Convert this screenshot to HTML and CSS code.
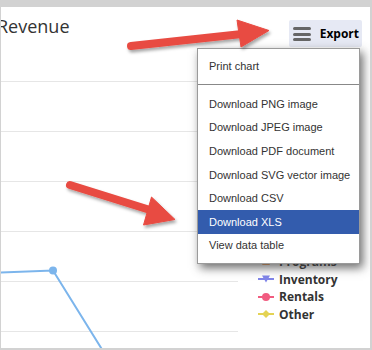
FILE: index.html
```html
<!DOCTYPE html>
<html lang="en">
<head>
  <meta charset="UTF-8">
  <title>Revenue chart export</title>
  <link rel="stylesheet" href="styles.css">
</head>
<body>

  <div class="frame">
    <div class="header">
      <h1 class="title">Revenue</h1>
      <button class="export-btn" type="button">
        <span class="burger"><i></i><i></i><i></i></span>
        Export
      </button>
    </div>

    <div class="main">
      <svg class="plot" width="237" height="267" viewBox="0 0 237 267">
        <g stroke="#e6e6e6" stroke-width="1">
          <line x1="0" y1="0.5" x2="237" y2="0.5"/>
          <line x1="0" y1="50.5" x2="237" y2="50.5"/>
          <line x1="0" y1="100.5" x2="237" y2="100.5"/>
          <line x1="0" y1="150.5" x2="237" y2="150.5"/>
          <line x1="0" y1="200.5" x2="237" y2="200.5"/>
          <line x1="0" y1="250.5" x2="237" y2="250.5"/>
        </g>
        <polyline points="-2,191.5 52,189.5 102,270" fill="none" stroke="#7cb5ec" stroke-width="2"/>
        <circle cx="52" cy="189.5" r="4" fill="#7cb5ec"/>
      </svg>

      <ul class="legend">
        <li>
          <svg width="16" height="10"><line x1="0" y1="5" x2="16" y2="5" stroke="#f7a35c" stroke-width="2"/><path d="M8 1 L12 8 L4 8 Z" fill="#f7a35c"/></svg>
          Programs
        </li>
        <li>
          <svg width="16" height="10"><line x1="0" y1="5" x2="16" y2="5" stroke="#8085e9" stroke-width="2"/><path d="M4 1.5 L12 1.5 L8 8.5 Z" fill="#8085e9"/></svg>
          Inventory
        </li>
        <li>
          <svg width="16" height="10"><line x1="0" y1="5" x2="16" y2="5" stroke="#f15c80" stroke-width="2"/><circle cx="8" cy="5" r="4" fill="#f15c80"/></svg>
          Rentals
        </li>
        <li>
          <svg width="16" height="10"><line x1="0" y1="5" x2="16" y2="5" stroke="#e4d354" stroke-width="2"/><path d="M8 1 L12 5 L8 9 L4 5 Z" fill="#e4d354"/></svg>
          Other
        </li>
      </ul>
    </div>

    <div class="menu">
      <div class="menu-item">Print chart</div>
      <hr class="menu-sep">
      <div class="menu-item">Download PNG image</div>
      <div class="menu-item">Download JPEG image</div>
      <div class="menu-item">Download PDF document</div>
      <div class="menu-item">Download SVG vector image</div>
      <div class="menu-item">Download CSV</div>
      <div class="menu-item active">Download XLS</div>
      <div class="menu-item">View data table</div>
    </div>
  </div>

  <!-- callout arrows drawn over the screenshot -->
  <svg class="callouts" width="372" height="350" viewBox="0 0 372 350">
    <defs>
      <filter id="shadow" x="-20%" y="-50%" width="140%" height="200%">
        <feDropShadow dx="1.5" dy="2.5" stdDeviation="1.5" flood-color="#000" flood-opacity="0.35"/>
      </filter>
    </defs>
    <g fill="#e84b42" stroke="#e84b42" filter="url(#shadow)">
      <line x1="131" y1="46" x2="242" y2="34" stroke-width="8" stroke-linecap="round"/>
      <path d="M237 20 L269 30.5 L241 47 Z" stroke-width="1" stroke-linejoin="round"/>
      <line x1="70" y1="185" x2="150" y2="210" stroke-width="8" stroke-linecap="round"/>
      <path d="M151.5 197 L175 219.5 L143.5 225 Z" stroke-width="1" stroke-linejoin="round"/>
    </g>
  </svg>

</body>
</html>
```

FILE: styles.css
```css
* {
  box-sizing: border-box;
}
body {
  margin: 0;
  position: relative;
  width: 372px;
  height: 350px;
  overflow: hidden;
  background: #fff;
}
.frame {
  position: relative;
  height: 350px;
  display: flex;
  flex-direction: column;
  border-style: solid;
  border-color: #d2d2d2;
  border-width: 7px 2px 2px 1px;
  background: #fff;
  overflow: hidden;
}
.header {
  height: 74px;
  display: flex;
  justify-content: space-between;
  align-items: flex-start;
}
.title {
  margin: 7px 0 0 -4px;
  font-family: "Open Sans", sans-serif;
  font-weight: 400;
  font-size: 18px;
  line-height: 24px;
  color: #333;
}
.export-btn {
  margin: 13px 8px 0 0;
  height: 27px;
  padding: 0 3px 0 4px;
  display: flex;
  align-items: center;
  gap: 9px;
  border: none;
  border-radius: 2px;
  background: #e6e9f4;
  font-family: "Open Sans", sans-serif;
  font-weight: 700;
  font-size: 12px;
  color: #000;
}
.burger {
  display: flex;
  flex-direction: column;
  gap: 2.5px;
  width: 18px;
  margin-top: 1px;
}
.burger i {
  display: block;
  height: 3px;
  border-radius: 2px;
  background: #666;
}
.main {
  flex: 1;
  display: flex;
}
.plot {
  display: block;
  flex: none;
  overflow: visible;
}
.legend {
  list-style: none;
  margin: 0;
  padding: 0 0 25px 20px;
  flex: 1;
  display: flex;
  flex-direction: column;
  justify-content: flex-end;
}
.legend li {
  display: flex;
  align-items: center;
  gap: 5px;
  height: 17.5px;
  font-family: "Open Sans", sans-serif;
  font-weight: 700;
  font-size: 12px;
  color: #333;
}
.legend svg {
  display: block;
}
.menu {
  position: absolute;
  left: 196px;
  top: 41px;
  width: 163px;
  padding: 5px 0;
  border: 1px solid #9a9a9a;
  background: #fff;
  box-shadow: 3px 4px 9px rgba(60, 60, 60, 0.75);
  font-family: "Liberation Sans", Arial, sans-serif;
  font-size: 11px;
  color: #333;
}
.menu-item {
  padding: 5.5px 11px;
  line-height: 12.65px;
  white-space: nowrap;
}
.menu-item.active {
  background: #335cad;
  color: #fff;
}
.menu-sep {
  margin: 6px 0 7.4px;
  border: none;
  border-top: 1px solid #888;
}
.callouts {
  position: absolute;
  top: 0;
  left: 0;
  pointer-events: none;
}
```
